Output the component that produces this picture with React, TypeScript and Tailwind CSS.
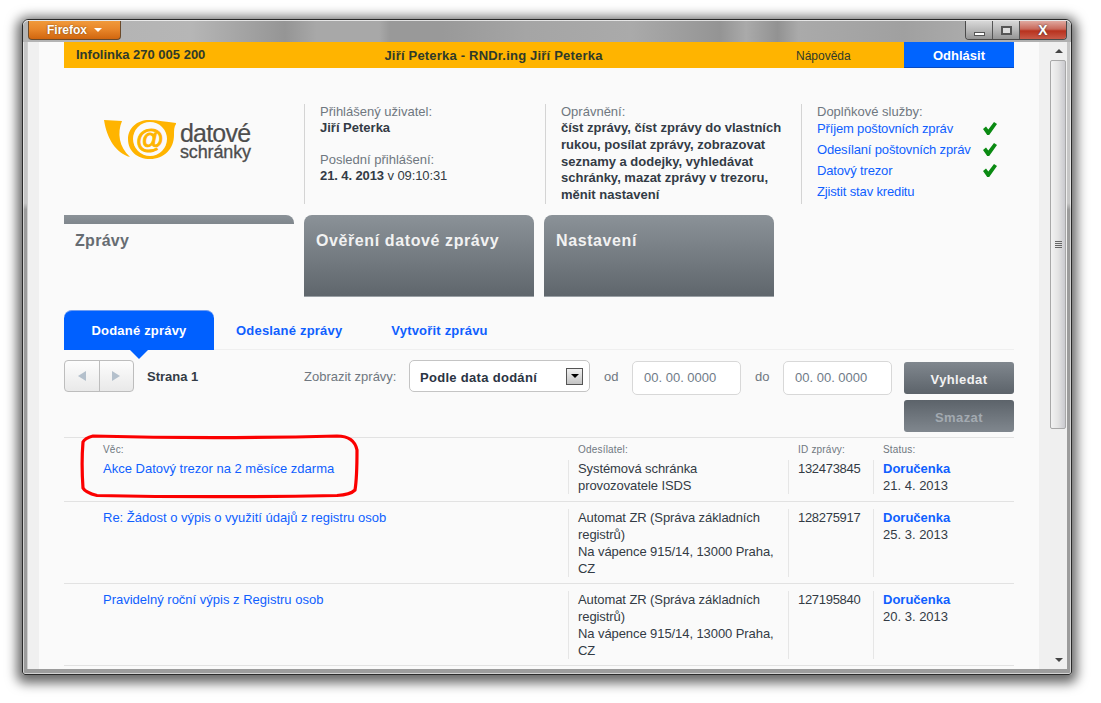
const font = "font-['Liberation_Sans',Arial,sans-serif]";

function Logo() {
  return (
    <div className="flex items-start">
      <svg width="76" height="44" viewBox="0 0 76 44" className="shrink-0">
        <path d="M0 1 L18 2 C13 14 15 28 26 38 C12 34 3 20 0 1Z" fill="#ffb400" />
        <path
          d="M24 20 C24 9 33 1 45 1 C54 1 62 3 72 4 L72 5 C70 8 70 11 70 16 C70 30 60 40 46 40 C33 40 24 32 24 20Z"
          fill="#ffb400"
        />
        <circle cx="46" cy="20" r="17" fill="#fafafa" />
        <text
          x="46"
          y="29"
          textAnchor="middle"
          fontSize="28"
          fontWeight="700"
          fill="#ffb400"
          stroke="#ffb400"
          strokeWidth="0.9"
          fontFamily="Liberation Sans"
        >
          @
        </text>
      </svg>
      <div className="flex flex-col text-[#4d4d4d]">
        <span className="text-[25px] leading-[24px] mt-[2px] tracking-[-0.8px] [-webkit-text-stroke:0.2px_#4d4d4d]">datové</span>
        <span className="text-[18px] leading-[16px] tracking-[-0.15px] -mt-[1px] [-webkit-text-stroke:0.3px_#4d4d4d]">schránky</span>
      </div>
    </div>
  );
}

function NavTab({ label }: { label: string }) {
  return (
    <div className="w-[230px] h-[82px] rounded-t-lg bg-[linear-gradient(#8b9298,#5f666c)] border-b border-[#9aa0a5] pt-[16px] px-3 text-[16px] leading-5 font-bold tracking-[0.6px] text-[#f2f2f2]">
      {label}
    </div>
  );
}

function Service({ label, ok }: { label: string; ok?: boolean }) {
  return (
    <div className="flex items-center h-[21px] w-[181px] justify-between">
      <span className="text-[#0f5fff] tracking-[-0.15px]">{label}</span>
      {ok && (
        <svg width="14" height="13" viewBox="0 0 14 13" className="mr-[1px] -mt-[1px]">
          <path d="M0 7 L3 4.5 L5.3 7.5 L11 0 L14 2 L6.2 13 L4.2 13Z" fill="#0a8a12" />
        </svg>
      )}
    </div>
  );
}

function DateInput() {
  return (
    <div className="w-[109px] h-[34px] mt-[1px] rounded-[5px] border border-[#d8d8d8] bg-white flex items-center pl-[11px] text-[#6f7b88]">
      00. 00. 0000
    </div>
  );
}

type RowData = {
  subject: string;
  sender: string[];
  id: string;
  date: string;
  head?: boolean;
};

const rows: RowData[] = [
  {
    subject: "Akce Datový trezor na 2 měsíce zdarma",
    sender: ["Systémová schránka", "provozovatele ISDS"],
    id: "132473845",
    date: "21. 4. 2013",
    head: true,
  },
  {
    subject: "Re: Žádost o výpis o využití údajů z registru osob",
    sender: ["Automat ZR (Správa základních", "registrů)", "Na vápence 915/14, 13000 Praha,", "CZ"],
    id: "128275917",
    date: "25. 3. 2013",
  },
  {
    subject: "Pravidelný roční výpis z Registru osob",
    sender: ["Automat ZR (Správa základních", "registrů)", "Na vápence 915/14, 13000 Praha,", "CZ"],
    id: "127195840",
    date: "20. 3. 2013",
  },
];

function Row({ row }: { row: RowData }) {
  const label = "h-[22px] text-[10px] leading-[23px] tracking-[0.2px] text-[#6f7780]";
  return (
    <div className={row.head ? "border-t border-[#e2e2e2] flex pb-[7px]" : "border-t border-[#e2e2e2] flex pb-[6px]"}>
      <div className="w-[504px] pl-[39px]">
        {row.head ? <div className={label}>Věc:</div> : <div className="h-[7px]" />}
        <div className="text-[#0f5fff] leading-[17px]">{row.subject}</div>
      </div>
      <div className={row.head ? "w-[220px]" : "w-[220px] pt-[7px]"}>
        {row.head && <div className={label + " pl-[10px]"}>Odesílatel:</div>}
        <div className="border-l border-[#e6e6e6] pl-[9px] leading-[17px] tracking-[-0.08px] text-[#333b45]">
          {row.sender.map((s) => (
            <div key={s} className="whitespace-nowrap">{s}</div>
          ))}
        </div>
      </div>
      <div className={row.head ? "w-[85px] flex flex-col" : "w-[85px] pt-[7px] flex flex-col"}>
        {row.head && <div className={label + " pl-[10px]"}>ID zprávy:</div>}
        <div className="flex-1 border-l border-[#e6e6e6] pl-[9px] leading-[17px] tracking-[-0.3px] text-[#333b45]">{row.id}</div>
      </div>
      <div className={row.head ? "flex-1 flex flex-col" : "flex-1 pt-[7px] flex flex-col"}>
        {row.head && <div className={label + " pl-[10px]"}>Status:</div>}
        <div className="flex-1 border-l border-[#e6e6e6] pl-[9px] leading-[17px] text-[#333b45]">
          <div className="font-bold text-[#0f5fff]">Doručenka</div>
          <div>{row.date}</div>
        </div>
      </div>
    </div>
  );
}

function Scrollbar() {
  return (
    <div className="w-[17px] shrink-0 bg-[#efefef] flex flex-col">
      <div className="h-[18px] flex items-center justify-center">
        <div className="w-0 h-0 border-x-[4px] border-x-transparent border-b-[4px] border-b-[#444]" />
      </div>
      <div className="w-[16px] h-[369px] rounded-[2px] border border-[#a8a8a8] bg-[linear-gradient(90deg,#f2f2f2,#e4e4e4_50%,#c9c9ce)] flex flex-col items-center justify-center gap-[1px]">
        <div className="w-[7px] h-[1px] bg-[#666]" />
        <div className="w-[7px] h-[1px] bg-[#666]" />
        <div className="w-[7px] h-[1px] bg-[#666]" />
        <div className="w-[7px] h-[1px] bg-[#666]" />
      </div>
      <div className="flex-1" />
      <div className="h-[18px] flex items-center justify-center">
        <div className="w-0 h-0 border-x-[4px] border-x-transparent border-t-[4px] border-t-[#444]" />
      </div>
    </div>
  );
}

export default function App() {
  return (
    <div className={font + " w-[1101px] h-[703px] bg-white pt-[19px] pl-[22px] overflow-hidden text-[13px]"}>
      <div className="w-[1050px] h-[656px] rounded-t-[6px] rounded-b-[3px] border border-[#2a2a2a] bg-[linear-gradient(#c6c6c6_0%,#c6c6c6_28%,#9c9c9c_29%,#9c9c9c_100%)] shadow-[0_3px_12px_5px_rgba(0,0,0,0.6),inset_0_0_0_1px_rgba(255,255,255,0.55)] flex flex-col px-[4px] pb-[5px]">
        {/* title bar */}
        <div className="h-[22px] -mx-[4px] pl-[5px] pr-[4px] shrink-0 flex justify-between rounded-t-[6px] border-t border-white/70 bg-[linear-gradient(90deg,#b4b4b4_9%,#b6b6b6_16%,#959595_25%,#a8a8a8_28%,#a8a8a8_34%,#999_35%,#999_40%,#a5a5a5_48%,#aaa_58%,#949494_66.5%,#aaa_69%,#929292_72%,#aaa_74%,#a0a0a0_84%,#b0b0b0_93%)]">
          <div className="w-[93px] h-[19px] rounded-b-[4px] border border-t-0 border-[#6b4a2a] bg-[linear-gradient(#f09a3c,#e9872a_45%,#d0660f)] flex items-center justify-center gap-[7px] text-white font-bold text-[12px] [text-shadow:0_0_2px_#7a4208]">
            Firefox
            <span className="w-0 h-0 border-x-[4px] border-x-transparent border-t-[4px] border-t-white" />
          </div>
          <div className="flex h-[19px] rounded-b-[4px] border border-t-0 border-[#4a4a4a] overflow-hidden">
            <div className="w-[27px] bg-[linear-gradient(#d8d8d8,#b8b8b8_50%,#959595)] border-r border-[#555] flex items-end justify-center pb-[3px]">
              <div className="w-[11px] h-[4px] bg-white border border-[#555]" />
            </div>
            <div className="w-[27px] bg-[linear-gradient(#d8d8d8,#b8b8b8_50%,#959595)] border-r border-[#555] flex items-center justify-center">
              <div className="w-[11px] h-[9px] border-2 border-[#555] bg-[#ddd]" />
            </div>
            <div className="w-[46px] bg-[linear-gradient(#e0a9a0,#c8685a_45%,#b8321e_55%,#c85a48)] flex items-center justify-center text-white font-bold text-[14px] leading-none [text-shadow:0_0_2px_#333]">
              X
            </div>
          </div>
        </div>

        {/* browser viewport */}
        <div className="flex-1 min-h-0 flex bg-[#fafafa] border-l border-[#cfcfcf] overflow-hidden">
          <div className="w-[11px] shrink-0 bg-[#f0f0f0]" />
          <div className="flex-1 min-w-0 px-[25px] relative overflow-hidden">
            {/* top strip */}
            <div className="h-[26px] bg-[#ffb400] flex items-center text-[#2f3a2a] leading-none">
              <span className="w-[256px] pl-[12px] font-bold text-[13px] -mt-[2px]">Infolinka 270 005 200</span>
              <span className="w-[347px] text-center font-bold text-[13px] tracking-[0.2px] mt-[1px]">Jiří Peterka - RNDr.ing Jiří Peterka</span>
              <span className="ml-[129px] text-[12px] mt-[1px]">Nápověda</span>
              <span className="w-[110px] h-full ml-auto bg-[#0064ff] border-b border-[#0a4bc0] flex items-center justify-center font-bold text-white text-[13px] pt-[1px]">
                Odhlásit
              </span>
            </div>

            {/* header */}
            <div className="h-[147px] flex pt-[36px]">
              <div className="w-[240px] pl-[40px] pt-[15px]">
                <Logo />
              </div>
              <div className="w-[241px] h-[100px] border-l border-[#d4d4d4] pl-[15px] text-[#333b45] leading-[16px]">
                <div className="text-[#6f7780]">Přihlášený uživatel:</div>
                <div className="font-bold">Jiří Peterka</div>
                <div className="text-[#6f7780] mt-[16px]">Poslední přihlášení:</div>
                <div className="tracking-[-0.1px]">
                  <span className="font-bold">21. 4. 2013</span> v 09:10:31
                </div>
              </div>
              <div className="w-[256px] h-[100px] border-l border-[#d4d4d4] pl-[15px] leading-[16.8px]">
                <div className="text-[#6f7780] leading-[16px]">Oprávnění:</div>
                <div className="font-bold text-[#333b45] w-[225px]">
                  číst zprávy, číst zprávy do vlastních rukou, posílat zprávy, zobrazovat seznamy a dodejky, vyhledávat schránky, mazat zprávy v trezoru, měnit nastavení
                </div>
              </div>
              <div className="h-[100px] border-l border-[#d4d4d4] pl-[15px]">
                <div className="text-[#6f7780] leading-[16px]">Doplňkové služby:</div>
                <div className="-mt-[2px]">
                  <Service label="Příjem poštovních zpráv" ok />
                  <Service label="Odesílaní poštovních zpráv" ok />
                  <Service label="Datový trezor" ok />
                  <Service label="Zjistit stav kreditu" />
                </div>
              </div>
            </div>

            {/* main nav */}
            <div className="flex gap-[10px] h-[82px]">
              <div className="w-[230px]">
                <div className="h-[9px] rounded-tr-lg bg-[linear-gradient(#8b9298,#7f868c)]" />
                <div className="pt-[7px] pl-[11px] text-[16px] leading-5 font-bold tracking-[0.3px] text-[#666c72]">Zprávy</div>
              </div>
              <NavTab label="Ověření datové zprávy" />
              <NavTab label="Nastavení" />
            </div>

            {/* sub tabs */}
            <div className="mt-[13px] h-[40px] flex items-center border-b border-[#efefef] font-bold text-[#0f5fff] text-[13px] tracking-[0.2px]">
              <div className="w-[150px] h-[40px] pt-[2px] rounded-t-lg bg-[#0060ff] border-t border-[#6f9cf0] text-white flex items-center justify-center relative">
                Dodané zprávy
                <div className="absolute left-[66px] top-[39px] w-0 h-0 border-x-[9px] border-x-transparent border-t-[9px] border-t-[#0060ff]" />
              </div>
              <div className="ml-[22px] pt-[2px]">Odeslané zprávy</div>
              <div className="ml-[49px] pt-[2px]">Vytvořit zprávu</div>
            </div>

            {/* toolbar */}
            <div className="h-[87px] pt-[10px] flex">
              <div className="w-[70px] h-[32px] rounded-[4px] border border-[#bdbdbd] bg-[linear-gradient(#fdfdfd,#e9e9e9)] flex">
                <div className="flex-1 flex items-center justify-center border-r border-[#bdbdbd]">
                  <div className="w-0 h-0 border-y-[5px] border-y-transparent border-r-[8px] border-r-[#b4c0cc]" />
                </div>
                <div className="flex-1 flex items-center justify-center">
                  <div className="w-0 h-0 border-y-[5px] border-y-transparent border-l-[8px] border-l-[#b4c0cc]" />
                </div>
              </div>
              <div className="ml-[13px] w-[157px] h-[32px] pt-[1px] flex items-center font-bold text-[#333b45]">Strana 1</div>
              <div className="w-[105px] h-[34px] flex items-center text-[#6f7780]">Zobrazit zprávy:</div>
              <div className="w-[181px] h-[32px] rounded-[5px] border border-[#c4c4c4] bg-white flex items-center justify-between pl-[10px] pr-[6px] font-bold text-[13px] tracking-[0.3px] text-[#2b3442]">
                <span className="pt-[3px]">Podle data dodání</span>
                <div className="w-[17px] h-[17px] border border-[#555] bg-[linear-gradient(#f0f0f0,#c4c4c4)] flex items-center justify-center">
                  <div className="w-0 h-0 border-x-[4px] border-x-transparent border-t-[4px] border-t-black" />
                </div>
              </div>
              <div className="w-[42px] h-[34px] pl-[14px] flex items-center text-[#6f7780]">od</div>
              <DateInput />
              <div className="w-[42px] h-[34px] pl-[14px] flex items-center text-[#6f7780]">do</div>
              <DateInput />
              <div className="ml-[12px] mt-[2px] flex flex-col gap-[6px] font-bold text-[13px] tracking-[0.4px]">
                <div className="w-[110px] h-[32px] pt-[3px] rounded-[3px] bg-[linear-gradient(#80878e,#5c636a)] flex items-center justify-center text-[#f2f2f2]">Vyhledat</div>
                <div className="w-[110px] h-[32px] pt-[3px] rounded-[3px] bg-[linear-gradient(#5c636a,#80878e)] flex items-center justify-center text-[#a3aab1]">Smazat</div>
              </div>
            </div>

            {/* messages */}
            {rows.map((r) => (
              <Row key={r.id} row={r} />
            ))}
            <div className="border-t border-[#e2e2e2]" />

            {/* hand drawn red marker over the first message */}
            <svg className="absolute left-[40px] top-[392px]" width="284" height="66" viewBox="0 0 284 66" fill="none">
              <path
                d="M14 2 C90 4 180 4 258 2 C268 2 276 6 278 16 C278 30 278 44 276 56 C272 60 266 61 258 61.5 C180 63 90 63 18 61.5 C12 60 6 58 4 54 C3 40 3 20 4 8 C6 4 10 3 14 2Z"
                stroke="#fb0000"
                strokeWidth="3.2"
              />
            </svg>
          </div>
          <div className="w-[11px] shrink-0 bg-[#f0f0f0]" />
          <Scrollbar />
        </div>
      </div>
    </div>
  );
}
